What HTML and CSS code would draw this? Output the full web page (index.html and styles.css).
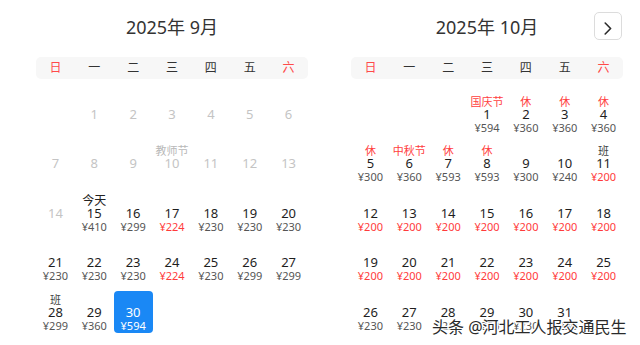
FILE: index.html
```html
<!DOCTYPE html>
<html lang="zh-CN">
<head>
<meta charset="utf-8">
<title>日历</title>
<link rel="stylesheet" href="styles.css">
</head>
<body>
<div class="page">
  <section class="cal">
    <h2 class="title">2025年 9月</h2>
    <div class="week">
      <span class="we">日</span><span>一</span><span>二</span><span>三</span><span>四</span><span>五</span><span class="we">六</span>
    </div>
    <div class="grid">
      <div class="cell"></div>
      <div class="cell off"><span class="lb"></span><span class="num">1</span></div>
      <div class="cell off"><span class="lb"></span><span class="num">2</span></div>
      <div class="cell off"><span class="lb"></span><span class="num">3</span></div>
      <div class="cell off"><span class="lb"></span><span class="num">4</span></div>
      <div class="cell off"><span class="lb"></span><span class="num">5</span></div>
      <div class="cell off"><span class="lb"></span><span class="num">6</span></div>

      <div class="cell off"><span class="lb"></span><span class="num">7</span></div>
      <div class="cell off"><span class="lb"></span><span class="num">8</span></div>
      <div class="cell off"><span class="lb"></span><span class="num">9</span></div>
      <div class="cell off"><span class="lb">教师节</span><span class="num">10</span></div>
      <div class="cell off"><span class="lb"></span><span class="num">11</span></div>
      <div class="cell off"><span class="lb"></span><span class="num">12</span></div>
      <div class="cell off"><span class="lb"></span><span class="num">13</span></div>

      <div class="cell off"><span class="lb"></span><span class="num">14</span></div>
      <div class="cell"><span class="lb today">今天</span><span class="num">15</span><span class="pr">¥410</span></div>
      <div class="cell"><span class="lb"></span><span class="num">16</span><span class="pr">¥299</span></div>
      <div class="cell"><span class="lb"></span><span class="num">17</span><span class="pr low">¥224</span></div>
      <div class="cell"><span class="lb"></span><span class="num">18</span><span class="pr">¥230</span></div>
      <div class="cell"><span class="lb"></span><span class="num">19</span><span class="pr">¥230</span></div>
      <div class="cell"><span class="lb"></span><span class="num">20</span><span class="pr">¥230</span></div>

      <div class="cell"><span class="lb"></span><span class="num">21</span><span class="pr">¥230</span></div>
      <div class="cell"><span class="lb"></span><span class="num">22</span><span class="pr">¥230</span></div>
      <div class="cell"><span class="lb"></span><span class="num">23</span><span class="pr">¥230</span></div>
      <div class="cell"><span class="lb"></span><span class="num">24</span><span class="pr low">¥224</span></div>
      <div class="cell"><span class="lb"></span><span class="num">25</span><span class="pr">¥230</span></div>
      <div class="cell"><span class="lb"></span><span class="num">26</span><span class="pr">¥299</span></div>
      <div class="cell"><span class="lb"></span><span class="num">27</span><span class="pr">¥299</span></div>

      <div class="cell"><span class="lb work">班</span><span class="num">28</span><span class="pr">¥299</span></div>
      <div class="cell"><span class="lb"></span><span class="num">29</span><span class="pr">¥360</span></div>
      <div class="cell sel"><span class="lb"></span><span class="num">30</span><span class="pr">¥594</span></div>
    </div>
  </section>

  <section class="cal">
    <h2 class="title">2025年 10月</h2>
    <div class="week">
      <span class="we">日</span><span>一</span><span>二</span><span>三</span><span>四</span><span>五</span><span class="we">六</span>
    </div>
    <div class="grid">
      <div class="cell"></div>
      <div class="cell"></div>
      <div class="cell"></div>
      <div class="cell"><span class="lb hol">国庆节</span><span class="num">1</span><span class="pr">¥594</span></div>
      <div class="cell"><span class="lb hol">休</span><span class="num">2</span><span class="pr">¥360</span></div>
      <div class="cell"><span class="lb hol">休</span><span class="num">3</span><span class="pr">¥360</span></div>
      <div class="cell"><span class="lb hol">休</span><span class="num">4</span><span class="pr">¥360</span></div>

      <div class="cell"><span class="lb hol">休</span><span class="num">5</span><span class="pr">¥300</span></div>
      <div class="cell"><span class="lb hol">中秋节</span><span class="num">6</span><span class="pr">¥360</span></div>
      <div class="cell"><span class="lb hol">休</span><span class="num">7</span><span class="pr">¥593</span></div>
      <div class="cell"><span class="lb hol">休</span><span class="num">8</span><span class="pr">¥593</span></div>
      <div class="cell"><span class="lb"></span><span class="num">9</span><span class="pr">¥300</span></div>
      <div class="cell"><span class="lb"></span><span class="num">10</span><span class="pr">¥240</span></div>
      <div class="cell"><span class="lb work">班</span><span class="num">11</span><span class="pr low">¥200</span></div>

      <div class="cell"><span class="lb"></span><span class="num">12</span><span class="pr low">¥200</span></div>
      <div class="cell"><span class="lb"></span><span class="num">13</span><span class="pr low">¥200</span></div>
      <div class="cell"><span class="lb"></span><span class="num">14</span><span class="pr low">¥200</span></div>
      <div class="cell"><span class="lb"></span><span class="num">15</span><span class="pr low">¥200</span></div>
      <div class="cell"><span class="lb"></span><span class="num">16</span><span class="pr low">¥200</span></div>
      <div class="cell"><span class="lb"></span><span class="num">17</span><span class="pr low">¥200</span></div>
      <div class="cell"><span class="lb"></span><span class="num">18</span><span class="pr low">¥200</span></div>

      <div class="cell"><span class="lb"></span><span class="num">19</span><span class="pr low">¥200</span></div>
      <div class="cell"><span class="lb"></span><span class="num">20</span><span class="pr low">¥200</span></div>
      <div class="cell"><span class="lb"></span><span class="num">21</span><span class="pr low">¥200</span></div>
      <div class="cell"><span class="lb"></span><span class="num">22</span><span class="pr low">¥200</span></div>
      <div class="cell"><span class="lb"></span><span class="num">23</span><span class="pr low">¥200</span></div>
      <div class="cell"><span class="lb"></span><span class="num">24</span><span class="pr low">¥200</span></div>
      <div class="cell"><span class="lb"></span><span class="num">25</span><span class="pr low">¥200</span></div>

      <div class="cell"><span class="lb"></span><span class="num">26</span><span class="pr">¥230</span></div>
      <div class="cell"><span class="lb"></span><span class="num">27</span><span class="pr">¥230</span></div>
      <div class="cell"><span class="lb"></span><span class="num">28</span><span class="pr">¥230</span></div>
      <div class="cell"><span class="lb"></span><span class="num">29</span><span class="pr">¥230</span></div>
      <div class="cell"><span class="lb"></span><span class="num">30</span><span class="pr">¥230</span></div>
      <div class="cell"><span class="lb"></span><span class="num">31</span><span class="pr">¥230</span></div>
    </div>
  </section>
</div>

<button class="next" aria-label="下个月">
  <svg width="8" height="13" viewBox="0 0 8 13"><path d="M1.2 1 L6.6 6.5 L1.2 12" fill="none" stroke="#2b2b2b" stroke-width="1.6" stroke-linecap="round" stroke-linejoin="round"/></svg>
</button>

<div class="watermark">头条 @河北工人报交通民生</div>
</body>
</html>
```

FILE: styles.css
```css
html, body {
  margin: 0;
  padding: 0;
  background: #fff;
}

body {
  width: 640px;
  height: 345px;
  overflow: hidden;
  position: relative;
  font-family: "Noto Sans", "Noto Sans CJK SC", sans-serif;
  color: #222;
}

.page {
  display: flex;
  gap: 43px;
  padding-left: 36px;
}

.cal {
  width: 272px;
  display: flex;
  flex-direction: column;
}

.title {
  margin: 14px 0 0;
  height: 26px;
  line-height: 26px;
  font-size: 18px;
  font-weight: 400;
  text-align: center;
  color: #333;
}

.week {
  margin-top: 17px;
  height: 22px;
  background: #f7f7f7;
  border-radius: 5px;
  display: grid;
  grid-template-columns: repeat(7, 1fr);
  align-items: center;
  font-size: 12px;
  line-height: 22px;
  color: #333;
  text-align: center;
}

.week .we {
  color: #ff4a4a;
}

.grid {
  margin-top: 14px;
  display: grid;
  grid-template-columns: repeat(7, 1fr);
  row-gap: 7.5px;
}

.cell {
  height: 42px;
  box-sizing: border-box;
  padding: 1.5px 0;
  display: flex;
  flex-direction: column;
  align-items: center;
  border-radius: 4px;
}

.lb, .num, .pr {
  display: block;
  height: 13px;
  line-height: 13px;
  white-space: nowrap;
}

.lb {
  font-size: 11px;
  color: #444;
}

.lb.today {
  font-size: 12px;
  color: #222;
}

.lb.hol {
  color: #ff4040;
}

.lb.work {
  color: #444;
}

.num {
  font-size: 13px;
  color: #1e1e1e;
}

.pr {
  font-size: 11px;
  color: #555;
}

.pr.low {
  color: #ff3b3b;
}

.off .num {
  color: #c4c4c4;
}

.off .lb {
  color: #b8b8b8;
}

.sel {
  background: #1a88f5;
}

.sel .num,
.sel .pr {
  color: #fff;
}

.next {
  position: absolute;
  top: 12px;
  left: 594px;
  width: 28px;
  height: 28px;
  padding: 4px 0 0;
  box-sizing: border-box;
  border: 1px solid #dcdcdc;
  border-radius: 5px;
  background: #fff;
  display: flex;
  align-items: center;
  justify-content: center;
}

.watermark {
  position: absolute;
  left: 432px;
  top: 317px;
  font-size: 16px;
  line-height: 20px;
  color: #2a2a2a;
  white-space: nowrap;
  text-shadow:
    1px 0 0 #fff, -1px 0 0 #fff, 0 1px 0 #fff, 0 -1px 0 #fff,
    1px 1px 0 #fff, -1px -1px 0 #fff, 1px -1px 0 #fff, -1px 1px 0 #fff;
}
```
